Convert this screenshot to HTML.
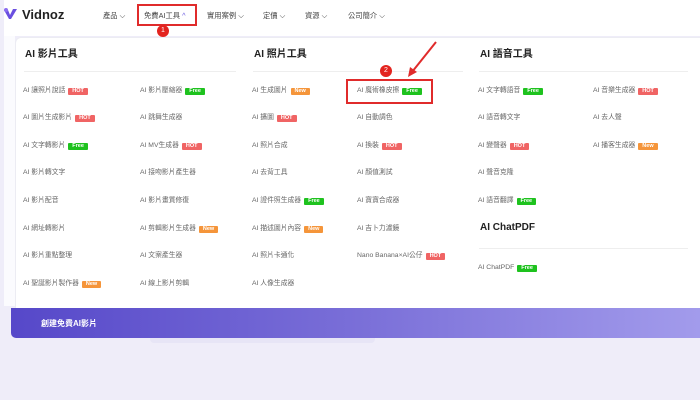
<!DOCTYPE html>
<html><head><meta charset="utf-8"><style>
*{margin:0;padding:0;box-sizing:border-box}
body{width:700px;height:400px;overflow:hidden;background:#efedf9;position:relative;font-family:"Liberation Sans","Noto Sans CJK TC",sans-serif;color:#555}
.nav{position:absolute;left:4px;top:0;width:696px;height:36px;background:#fff}
.lstrip{position:absolute;left:4px;top:36px;width:11px;height:270px;background:#fbfbfe}
.panel{position:absolute;left:15px;top:37px;width:690px;height:272px;background:#fff;border-top:1px solid #ececf3;border-left:1px solid #ececf3;border-radius:6px 0 0 0}
.bar{position:absolute;left:11px;top:308px;width:695px;height:30px;border-radius:0 0 0 5px;background:linear-gradient(90deg,#5648c9,#7a6fd8 50%,#a39cec);color:#fff;font-size:8px;font-weight:bold;padding:10px 0 0 30px}
.shadow{position:absolute;left:150px;top:338px;width:225px;height:5px;background:#e7e5f6;border-radius:0 0 4px 4px}
.t{position:absolute;font-size:6.8px;color:#666;white-space:nowrap;line-height:8px}
.h{position:absolute;font-size:10px;font-weight:bold;color:#222}
.ln{position:absolute;height:1px;background:#eee}
.b{display:inline-block;font-size:5.5px;color:#fff;padding:0 4px;line-height:7px;margin-left:3px;border-radius:1px;font-weight:bold;vertical-align:0}
.hot{background:#f06464}.free{background:#1ec21e}.new{background:#f5953a}
.n{position:absolute;top:11px;font-size:7.3px;color:#444}
.red{position:absolute;border:2px solid #e02b2b}
.c{position:absolute;width:12px;height:12px;border-radius:50%;background:#e3241f;color:#fff;font-size:7px;text-align:center;line-height:12px}
</style></head><body>
<div class="nav"></div>
<div class="lstrip"></div>
<svg style="position:absolute;left:3px;top:8px" width="16" height="12" viewBox="0 0 16 12"><path d="M1 2 L6 11 L8 11 L14 1 L10 1 L7 7 L5 2Z" fill="#6a4fe0"/><circle cx="3" cy="2" r="2" fill="#8b6cf0"/></svg>
<div style="position:absolute;left:22px;top:7px;font-size:13px;font-weight:bold;color:#222">Vidnoz</div>
<div class="n" style="left:103px">產品 ⌵</div>
<div class="n" style="left:144px">免費AI工具 <span style="color:#6a5ae0">^</span></div>
<div class="n" style="left:207px">實用案例 ⌵</div>
<div class="n" style="left:263px">定價 ⌵</div>
<div class="n" style="left:305px">資源 ⌵</div>
<div class="n" style="left:348px">公司簡介 ⌵</div>
<div class="panel"></div>
<div class="h" style="left:25px;top:45px">AI 影片工具</div>
<div class="h" style="left:254px;top:45px">AI 照片工具</div>
<div class="h" style="left:480px;top:45px">AI 語音工具</div>
<div class="ln" style="left:24px;top:71px;width:212px"></div>
<div class="ln" style="left:253px;top:71px;width:210px"></div>
<div class="ln" style="left:479px;top:71px;width:209px"></div>
<div class="t" style="left:23px;top:87px">AI 讓照片說話<span class="b hot">HOT</span></div>
<div class="t" style="left:140px;top:87px">AI 影片壓縮器<span class="b free">Free</span></div>
<div class="t" style="left:252px;top:87px">AI 生成圖片<span class="b new">New</span></div>
<div class="t" style="left:357px;top:87px">AI 魔術橡皮擦<span class="b free">Free</span></div>
<div class="t" style="left:478px;top:87px">AI 文字轉語音<span class="b free">Free</span></div>
<div class="t" style="left:593px;top:87px">AI 音樂生成器<span class="b hot">HOT</span></div>
<div class="t" style="left:23px;top:114px">AI 圖片生成影片<span class="b hot">HOT</span></div>
<div class="t" style="left:140px;top:114px">AI 跳舞生成器</div>
<div class="t" style="left:252px;top:114px">AI 擴圖<span class="b hot">HOT</span></div>
<div class="t" style="left:357px;top:114px">AI 自動調色</div>
<div class="t" style="left:478px;top:114px">AI 語音轉文字</div>
<div class="t" style="left:593px;top:114px">AI 去人聲</div>
<div class="t" style="left:23px;top:142px">AI 文字轉影片<span class="b free">Free</span></div>
<div class="t" style="left:140px;top:142px">AI MV生成器<span class="b hot">HOT</span></div>
<div class="t" style="left:252px;top:142px">AI 照片合成</div>
<div class="t" style="left:357px;top:142px">AI 換裝<span class="b hot">HOT</span></div>
<div class="t" style="left:478px;top:142px">AI 變聲器<span class="b hot">HOT</span></div>
<div class="t" style="left:593px;top:142px">AI 播客生成器<span class="b new">New</span></div>
<div class="t" style="left:23px;top:169px">AI 影片轉文字</div>
<div class="t" style="left:140px;top:169px">AI 接吻影片產生器</div>
<div class="t" style="left:252px;top:169px">AI 去背工具</div>
<div class="t" style="left:357px;top:169px">AI 顏值測試</div>
<div class="t" style="left:478px;top:169px">AI 聲音克隆</div>
<div class="t" style="left:23px;top:197px">AI 影片配音</div>
<div class="t" style="left:140px;top:197px">AI 影片畫質修復</div>
<div class="t" style="left:252px;top:197px">AI 證件照生成器<span class="b free">Free</span></div>
<div class="t" style="left:357px;top:197px">AI 寶寶合成器</div>
<div class="t" style="left:478px;top:197px">AI 語音翻譯<span class="b free">Free</span></div>
<div class="t" style="left:23px;top:225px">AI 網址轉影片</div>
<div class="t" style="left:140px;top:225px">AI 剪輯影片生成器<span class="b new">New</span></div>
<div class="t" style="left:252px;top:225px">AI 描述圖片內容<span class="b new">New</span></div>
<div class="t" style="left:357px;top:225px">AI 吉卜力濾鏡</div>
<div class="h" style="left:480px;top:222px">AI ChatPDF</div>
<div class="ln" style="left:479px;top:248px;width:209px"></div>
<div class="t" style="left:23px;top:252px">AI 影片重點整理</div>
<div class="t" style="left:140px;top:252px">AI 文案產生器</div>
<div class="t" style="left:252px;top:252px">AI 照片卡通化</div>
<div class="t" style="left:357px;top:252px">Nano Banana×AI公仔<span class="b hot">HOT</span></div>
<div class="t" style="left:478px;top:264px">AI ChatPDF<span class="b free">Free</span></div>
<div class="t" style="left:23px;top:280px">AI 聖誕影片製作器<span class="b new">New</span></div>
<div class="t" style="left:140px;top:280px">AI 線上影片剪輯</div>
<div class="t" style="left:252px;top:280px">AI 人像生成器</div>
<div class="shadow"></div>
<div class="bar">創建免費AI影片</div>
<div class="red" style="left:137px;top:4px;width:60px;height:22px"></div>
<div class="c" style="left:157px;top:25px">1</div>
<div class="red" style="left:346px;top:79px;width:87px;height:25px"></div>
<div class="c" style="left:380px;top:65px">2</div>
<svg style="position:absolute;left:400px;top:36px" width="45" height="45"><line x1="36" y1="6" x2="12" y2="36" stroke="#e02b2b" stroke-width="2"/><path d="M8 41 L10 31 L17 36Z" fill="#e02b2b"/></svg>
</body></html>
